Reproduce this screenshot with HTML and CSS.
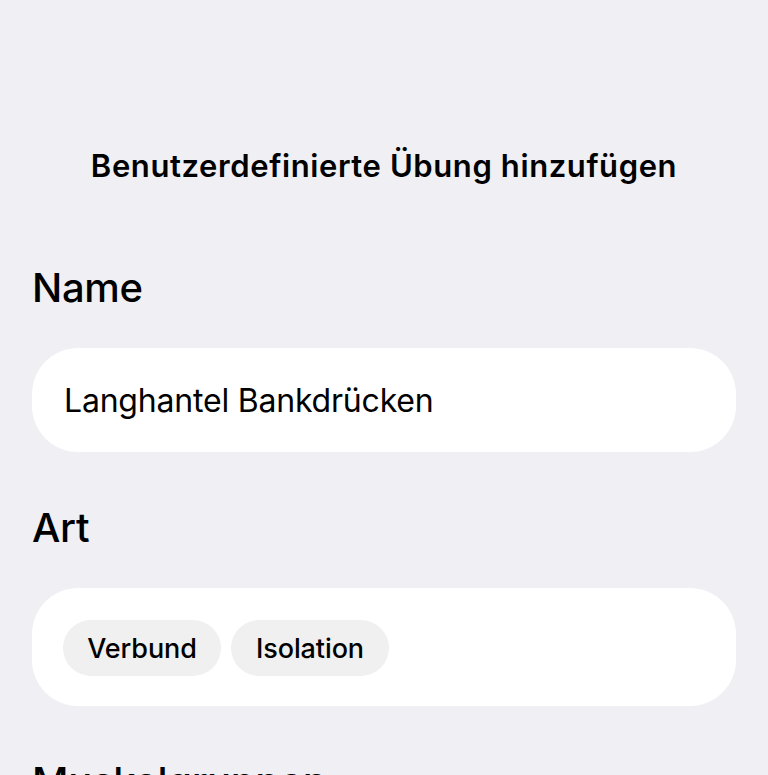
FILE: index.html
```html
<!doctype html>
<html lang="de">
    <head>
        <meta charset="UTF-8" />
        <title>Benutzerdefinierte Übung hinzufügen</title>
        <link rel="stylesheet" href="styles.css">
    </head>

    <body>
        <h1 class="page-title">Benutzerdefinierte Übung hinzufügen</h1>

        <section class="field">
            <h2 class="field-label">Name</h2>
            <div class="field-box name-box">
                <input type="text" id="exercise_name" value="Langhantel Bankdrücken" />
            </div>
        </section>

        <section class="field">
            <h2 class="field-label">Art</h2>
            <div class="field-box chip-box">
                <button class="chip">Verbund</button>
                <button class="chip">Isolation</button>
            </div>
        </section>

        <section class="field">
            <h2 class="field-label">Muskelgruppen</h2>
        </section>
    </body>
</html>
```

FILE: styles.css
```css
* {
    box-sizing: border-box;
    margin: 0;
    padding: 0;
}

body {
    background: #efeff4;
    color: #000;
    font-family: Inter, "Noto Sans", sans-serif;
    padding: 148px 32px 0;
    overflow: hidden;
}

.page-title {
    text-align: center;
    font-size: 31px;
    line-height: 36px;
    font-weight: 600;
    letter-spacing: 0.6px;
    margin-bottom: 80px;
}

.field {
    margin-bottom: 52px;
}

.field-label {
    font-size: 40px;
    line-height: 48px;
    font-weight: 500;
    letter-spacing: -0.3px;
    margin-bottom: 36px;
}

.field-box {
    background: #fff;
    border-radius: 46px;
}

.name-box {
    height: 104px;
    display: flex;
    align-items: center;
    padding: 0 32px;
}

.name-box input {
    width: 100%;
    border: none;
    outline: none;
    background: transparent;
    font-family: inherit;
    font-size: 32px;
    letter-spacing: -0.2px;
    color: #000;
}

.chip-box {
    display: flex;
    gap: 10px;
    padding: 32px 31px 30px;
}

.chip {
    height: 56px;
    min-width: 158px;
    padding: 0 24px;
    border: none;
    border-radius: 28px;
    background: #f0f0f0;
    color: #000;
    font-family: inherit;
    font-size: 27px;
    font-weight: 500;
    letter-spacing: -0.1px;
    cursor: pointer;
}
```
